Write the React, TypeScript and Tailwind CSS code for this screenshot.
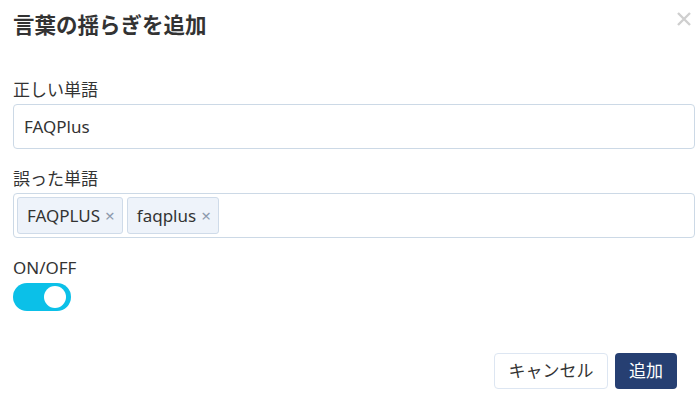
import React from "react";

const font = { fontFamily: '"Noto Sans", "Noto Sans CJK JP", sans-serif' };

function Tag({ label }: { label: string }) {
  return (
    <div className="flex h-[37px] items-center rounded-[3px] border border-[#cfdbe9] bg-[#eef3fa] pl-[9px] pr-[7px]">
      <span className="text-[17px] text-[#333]">{label}</span>
      <span className="ml-[5px] text-[17px] leading-none text-[#8d9aad]">×</span>
    </div>
  );
}

export default function App() {
  return (
    <div className="h-[418px] w-[699px] bg-white text-[#333]" style={font}>
      <div className="flex items-start justify-between pl-[13px] pr-[7px] pt-[7px]">
        <h1 className="text-[21.5px] font-bold leading-[36px] text-[#333]">言葉の揺らぎを追加</h1>
        <svg width="16" height="16" viewBox="0 0 16 16" className="mt-[4px]">
          <path d="M2 2 L14 14 M14 2 L2 14" stroke="#cfcfcf" strokeWidth="2.4" strokeLinecap="butt" />
        </svg>
      </div>

      <div className="px-[13px] pr-[4px] pt-[35px]">
        <div className="text-[17px] leading-[24px]">正しい単語</div>
        <div className="mt-[2px] flex h-[45px] items-center rounded-[4px] border border-[#ccd9e6] px-[10px] text-[17px]">
          FAQPlus
        </div>

        <div className="mt-[18px] text-[17px] leading-[24px]">誤った単語</div>
        <div className="mt-[2px] flex h-[45px] items-center gap-[4px] rounded-[4px] border border-[#ccd9e6] px-[3px]">
          <Tag label="FAQPLUS" />
          <Tag label="faqplus" />
        </div>

        <div className="mt-[18px] text-[17px] leading-[24px]">ON/OFF</div>
        <div className="mt-[3px] flex h-[28px] w-[58px] items-center justify-end rounded-full bg-[#0bc0e8] pr-[5px]">
          <div className="h-[22px] w-[22px] rounded-full bg-white" />
        </div>
      </div>

      <div className="flex justify-end gap-[7px] pr-[22px] pt-[42px]">
        <button className="flex h-[36px] w-[114px] items-center justify-center rounded-[4px] border border-[#dde6f2] bg-white text-[17px] text-[#333]">
          キャンセル
        </button>
        <button className="flex h-[36px] w-[62px] items-center justify-center rounded-[4px] bg-[#263f72] text-[17px] text-white">
          追加
        </button>
      </div>
    </div>
  );
}
